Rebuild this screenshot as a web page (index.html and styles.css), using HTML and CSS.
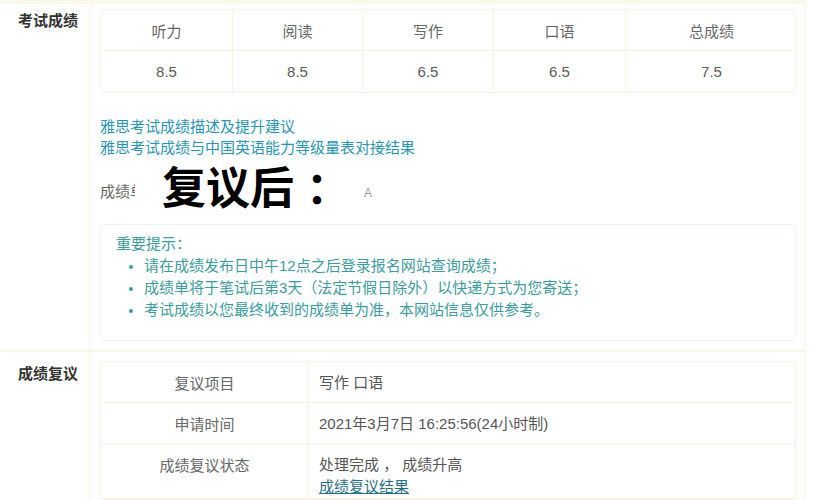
FILE: index.html
```html
<!DOCTYPE html>
<html lang="zh-CN">
<head>
<meta charset="utf-8">
<title>成绩查询</title>
<link rel="stylesheet" href="styles.css">
</head>
<body>
<div class="page">
  <section class="row first">
    <div class="label">考试成绩</div>
    <div class="content">
      <div class="scores">
        <div class="cell head">听力</div>
        <div class="cell head">阅读</div>
        <div class="cell head">写作</div>
        <div class="cell head">口语</div>
        <div class="cell head">总成绩</div>
        <div class="cell">8.5</div>
        <div class="cell">8.5</div>
        <div class="cell">6.5</div>
        <div class="cell">6.5</div>
        <div class="cell">7.5</div>
      </div>
      <div class="links">
        <a class="link" href="#">雅思考试成绩描述及提升建议</a>
        <a class="link" href="#">雅思考试成绩与中国英语能力等级量表对接结果</a>
      </div>
      <div class="status">
        <span>成绩单</span><span class="faint">A</span>
        <div class="overlay">复议后<span class="colon">：</span></div>
      </div>
      <div class="tips">
        <div class="tips-title">重要提示：</div>
        <ul class="tips-list">
          <li>请在成绩发布日中午12点之后登录报名网站查询成绩；</li>
          <li>成绩单将于笔试后第3天（法定节假日除外）以快递方式为您寄送；</li>
          <li>考试成绩以您最终收到的成绩单为准，本网站信息仅供参考。</li>
        </ul>
      </div>
    </div>
  </section>
  <section class="row second">
    <div class="label">成绩复议</div>
    <div class="content">
      <div class="review">
        <div class="rcell rkey">复议项目</div>
        <div class="rcell rval">写作 口语</div>
        <div class="rcell rkey">申请时间</div>
        <div class="rcell rval">2021年3月7日 16:25:56(24小时制)</div>
        <div class="rcell rkey">成绩复议状态</div>
        <div class="rcell rval">处理完成 ， 成绩升高<br><a class="result" href="#">成绩复议结果</a></div>
      </div>
    </div>
  </section>
</div>
</body>
</html>
```
FILE: styles.css
```css
* { box-sizing: border-box; }
html, body { margin: 0; padding: 0; background: #fff; }
body {
  font-family: "Liberation Sans", "Noto Sans CJK SC", sans-serif;
  font-size: 15px;
  color: #555;
  overflow: hidden;
  height: 500px;
}
.page {
  width: 806px;
  border-right: 2px solid #fbf8ec;
  border-top: 4px solid #fbf8ec;
  min-height: 500px;
}
.row {
  display: grid;
  grid-template-columns: 90px 1fr;
}
.row.first { border-bottom: 2px solid #faf6e6; height: 348px; }
.label {
  border-right: 1px solid #f8f4e4;
  padding: 7px 0 0 18px;
  font-weight: 700;
  color: #333;
  line-height: 20px;
}
.second .label { padding-top: 12px; }
.content { padding: 5px 8px 0 10px; }
.second .content { padding-top: 9px; }
.scores {
  display: grid;
  grid-template-columns: 132px 130px 131px 132px 171px;
  grid-template-rows: 41px 41px;
  border: 1px solid #f7f3e2;
  border-radius: 4px;
  width: 696px;
}
.cell {
  display: flex;
  align-items: center;
  justify-content: center;
  border-right: 1px solid #f7f3e2;
  color: #5a5a5a;
}
.cell:nth-child(5n) { border-right: none; }
.cell.head { border-bottom: 1px solid #f7f3e2; color: #666; }
.links {
  display: flex;
  flex-direction: column;
  margin-top: 23px;
  line-height: 21px;
}
.link { color: #2796b6; text-decoration: none; }
.status {
  position: relative;
  margin-top: 23px;
  line-height: 22px;
  color: #666;
}
.faint { margin-left: 219px; color: #999; font-size: 12px; }
.overlay {
  position: absolute;
  left: 35px;
  top: -24px;
  width: 225px;
  height: 60px;
  background: #fff;
  color: #000;
  font-family: "Noto Sans CJK SC", sans-serif;
  font-weight: 700;
  font-size: 44px;
  line-height: 56px;
  padding-left: 27px;
  white-space: nowrap;
}
.colon { margin-left: 12px; }
.tips {
  margin-top: 20px;
  width: 696px;
  border: 1px solid #eef5ef;
  border-radius: 4px;
  padding: 8px 0 19px 15px;
  color: #3a9c9c;
  line-height: 22px;
}
.tips-list {
  margin: 0;
  padding-left: 28px;
}
.tips-list li::marker { font-size: 13px; }
.review {
  display: grid;
  grid-template-columns: 208px 488px;
  width: 696px;
  border: 1px solid #f7f3e2;
  border-radius: 4px;
}
.rcell {
  border-bottom: 1px solid #f7f3e2;
  min-height: 41px;
}
.rkey { display: flex; justify-content: center; border-right: 1px solid #f7f3e2; padding-top: 10px; color: #666; }
.rval { padding-left: 10px; padding-top: 10px; line-height: 22px; }
.result { color: #1f6f86; text-decoration: underline; }
```
